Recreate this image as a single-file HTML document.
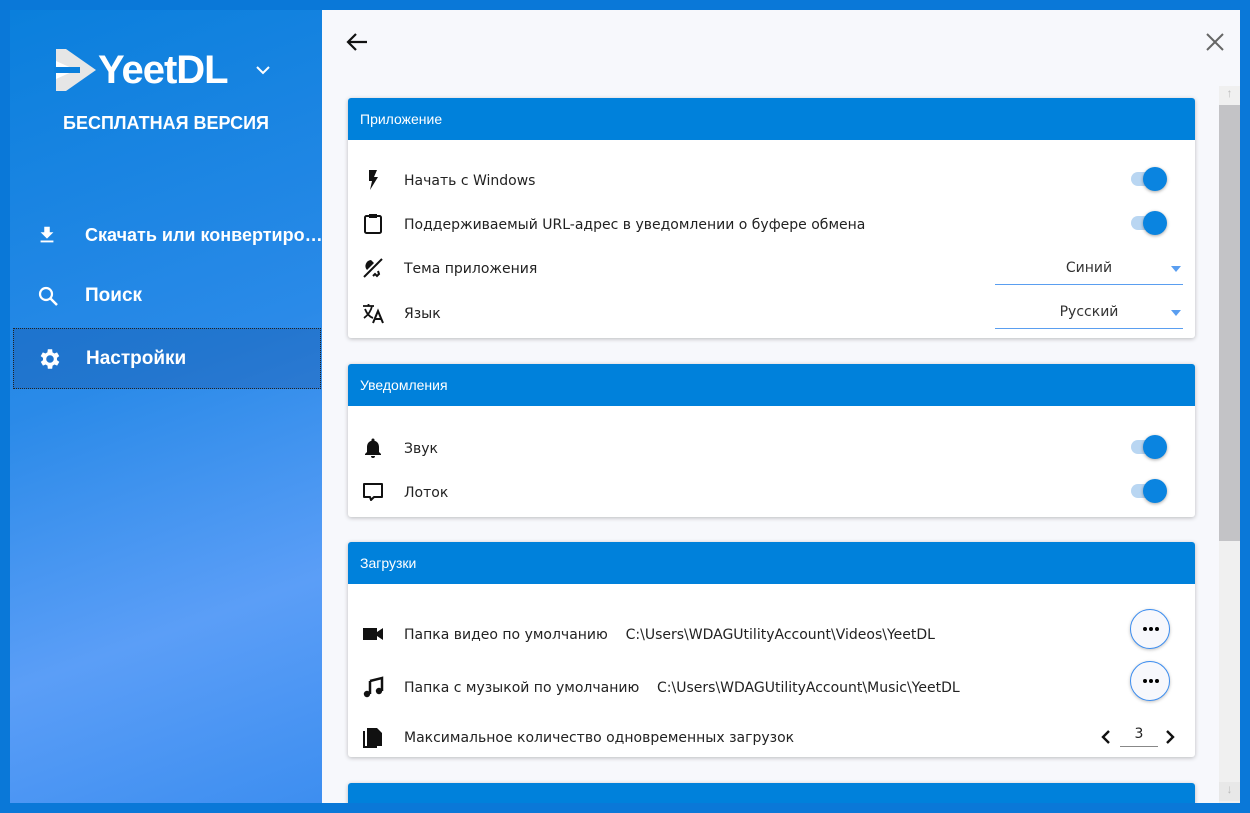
<!DOCTYPE html>
<html><head><meta charset="utf-8"><style>
*{margin:0;padding:0;box-sizing:border-box}
body{width:1250px;height:813px;overflow:hidden;background:#0a78d8;font-family:"Liberation Sans","DejaVu Sans",sans-serif;position:relative}
.side{position:absolute;left:10px;top:10px;width:312px;height:793px;background:linear-gradient(160deg,#0a7fdc 0%,#2a8ae8 45%,#5b9ef7 75%,#3d8ef0 100%);color:#fff}
.main{position:absolute;left:322px;top:10px;width:918px;height:793px;background:#f7f8fc;overflow:hidden}
.abs{position:absolute}
.nav{position:absolute;left:0;width:312px;height:62px;display:flex;align-items:center;font-weight:bold;font-size:19px;white-space:nowrap}
.nav svg{position:absolute;left:26px}
.nav span{position:absolute;left:75px}
.card{position:absolute;left:26px;width:847px;background:#fff;border-radius:3px;box-shadow:0 1px 4px rgba(0,0,0,.25)}
.hd{height:42px;background:#0081db;color:#fff;font-size:14px;line-height:42px;padding-left:12px;border-radius:3px 3px 0 0}
.row{position:absolute;left:0;width:847px;height:40px;color:#222;font-family:"DejaVu Sans","Liberation Sans",sans-serif;font-size:14px}
.row .ic{position:absolute;left:13px;top:8px}
.row .t{position:absolute;left:56px;top:13px}
.tg{position:absolute;left:783px;top:12px;width:30px;height:14px;border-radius:7px;background:#b9d6f2}
.tg:after{content:"";position:absolute;left:12px;top:-5px;width:24px;height:24px;border-radius:50%;background:#0a84e0;box-shadow:0 1px 3px rgba(0,0,0,.35)}
.sel{position:absolute;left:647px;width:188px;height:32px;border-bottom:1px solid #5a9ef0;text-align:center;font-size:14px;line-height:30px;color:#333}
.sel:after{content:"";position:absolute;right:2px;top:13px;border:5px solid transparent;border-top:6px solid #5a9ef0;border-bottom:0}
.dots{position:absolute;left:782px;width:40px;height:40px;border-radius:50%;border:1.5px solid #3d8ef0;background:#f7f8fc;box-shadow:0 1px 3px rgba(0,0,0,.25)}
.dots i{position:absolute;top:17px;width:4px;height:4px;border-radius:50%;background:#000}
</style></head><body>
<div class="side">
  <svg class="abs" style="left:44px;top:37px" width="44" height="46" viewBox="0 0 44 46"><path d="M2 2 L12 2 L42 23 L12 44 L2 44 Z" fill="#e6e6e6"/><path d="M2 14 L22 23 L2 32 Z" fill="#fff"/><rect x="0" y="20" width="26" height="6" fill="#0a7fdc"/></svg>
  <div class="abs" style="left:88px;top:38px;font-size:40px;font-weight:bold;letter-spacing:-1px;line-height:44px">YeetDL</div>
  <svg class="abs" style="left:246px;top:55px" width="14" height="10" viewBox="0 0 14 10"><path d="M1 2 L7 8 L13 2" stroke="#fff" stroke-width="2" fill="none"/></svg>
  <div class="abs" style="left:0;width:312px;top:103px;text-align:center;font-weight:bold;font-size:18px">БЕСПЛАТНАЯ ВЕРСИЯ</div>
  <div class="nav" style="top:194px"><svg width="22" height="22" viewBox="0 0 24 24"><path d="M5 20h14v-2H5zM19 9h-4V3H9v6H5l7 7z" fill="#fff"/></svg><span style="font-size:18px">Скачать или конвертиро…</span></div>
  <div class="nav" style="top:255px"><svg width="24" height="24" viewBox="0 0 24 24"><circle cx="10" cy="10" r="6" stroke="#fff" stroke-width="2.2" fill="none"/><path d="M14.5 14.5L21 21" stroke="#fff" stroke-width="2.5"/></svg><span>Поиск</span></div>
  <div class="nav" style="top:318px;left:3px;width:308px;height:61px;background:rgba(20,80,160,.35);border:1px dotted #222"><svg style="left:23px" width="26" height="26" viewBox="0 0 24 24"><path fill="#fff" d="M19.4 13a7.5 7.5 0 000-2l2.1-1.6-2-3.5-2.5 1a7 7 0 00-1.7-1L15 3h-4l-.4 2.9a7 7 0 00-1.7 1l-2.5-1-2 3.5L6.6 11a7.5 7.5 0 000 2l-2.1 1.6 2 3.5 2.5-1a7 7 0 001.7 1L11 21h4l.4-2.9a7 7 0 001.7-1l2.5 1 2-3.5zM13 15.5a3.5 3.5 0 110-7 3.5 3.5 0 010 7z" transform="translate(-1 0)"/></svg><span style="left:72px">Настройки</span></div>
</div>
<div class="main">
  <svg class="abs" style="left:24px;top:22px" width="22" height="20" viewBox="0 0 22 20"><path d="M21 10H3M10 2L2 10l8 8" stroke="#111" stroke-width="2.2" fill="none"/></svg>
  <svg class="abs" style="left:883px;top:22px" width="20" height="20" viewBox="0 0 20 20"><path d="M2 2L18 18M18 2L2 18" stroke="#666" stroke-width="2"/></svg>
  <div class="abs" style="left:897px;top:76px;width:21px;height:717px;background:#f0f0f0"></div>
  <div class="abs" style="left:897px;top:95px;width:21px;height:436px;background:#c3c3c6"></div>
  <div class="abs" style="left:897px;top:76px;width:21px;height:19px;color:#bbb;font-size:12px;text-align:center">↑</div>
  <div class="abs" style="left:897px;top:772px;width:21px;height:19px;color:#bbb;font-size:12px;text-align:center;background:#e8e8e8">↓</div>

  <div class="card" style="top:88px;height:240px"><div class="hd">Приложение</div>
    <div class="row" style="top:62px"><svg class="ic" width="24" height="24" viewBox="0 0 24 24"><path d="M8 2h8l-3 7h4L9 22l2-9H8z" fill="#111"/></svg><span class="t">Начать с Windows</span><div class="tg"></div></div>
    <div class="row" style="top:106px"><svg class="ic" width="24" height="24" viewBox="0 0 24 24"><rect x="4" y="4" width="16" height="17" rx="1.5" stroke="#111" stroke-width="2" fill="none"/><rect x="8" y="2" width="8" height="4" fill="#111"/></svg><span class="t">Поддерживаемый URL-адрес в уведомлении о буфере обмена</span><div class="tg"></div></div>
    <div class="row" style="top:150px"><svg class="ic" width="24" height="24" viewBox="0 0 24 24"><path d="M3 21L21 3" stroke="#111" stroke-width="2"/><path d="M10 4a6 6 0 00-4 10l7-7" fill="#111"/><path d="M12 20l2-2 2 2 2-2-1-3" stroke="#111" stroke-width="2" fill="none"/></svg><span class="t">Тема приложения</span><div class="sel" style="top:5px">Синий</div></div>
    <div class="row" style="top:195px"><svg class="ic" width="24" height="24" viewBox="0 0 24 24"><path d="M2 5h11M7.5 3v2M4 8c2 5 5 8 8 9M11 5c-1 5-4 9-8 12" stroke="#111" stroke-width="1.8" fill="none"/><path d="M12 22l5-12 5 12M14 18h6" stroke="#111" stroke-width="2" fill="none"/></svg><span class="t">Язык</span><div class="sel" style="top:4px">Русский</div></div>
  </div>

  <div class="card" style="top:354px;height:153px"><div class="hd">Уведомления</div>
    <div class="row" style="top:64px"><svg class="ic" width="24" height="24" viewBox="0 0 24 24"><path d="M12 22a2 2 0 002-2h-4a2 2 0 002 2zM18 16v-5c0-3-1.6-5.6-4.5-6.3V4a1.5 1.5 0 00-3 0v.7C7.6 5.4 6 8 6 11v5l-2 2v1h16v-1z" fill="#111"/></svg><span class="t">Звук</span><div class="tg"></div></div>
    <div class="row" style="top:108px"><svg class="ic" width="24" height="24" viewBox="0 0 24 24"><path d="M3 4h18v13H13l-3 3-1-3H3z" stroke="#111" stroke-width="2" fill="none" stroke-linejoin="round"/></svg><span class="t">Лоток</span><div class="tg"></div></div>
  </div>

  <div class="card" style="top:532px;height:215px"><div class="hd">Загрузки</div>
    <div class="row" style="top:72px"><svg class="ic" width="24" height="24" viewBox="0 0 24 24"><path d="M2 6h14v12H2zM16 10l6-4v12l-6-4z" fill="#111"/></svg><span class="t">Папка видео по умолчанию&nbsp;&nbsp;&nbsp;&nbsp;C:\Users\WDAGUtilityAccount\Videos\YeetDL</span><div class="dots" style="top:-5px"><i style="left:12px"></i><i style="left:18px"></i><i style="left:24px"></i></div></div>
    <div class="row" style="top:125px"><svg class="ic" width="24" height="24" viewBox="0 0 24 24"><path d="M9 6l12-3v13" stroke="#111" stroke-width="2.5" fill="none"/><path d="M9 6v13" stroke="#111" stroke-width="2.5"/><circle cx="6" cy="19" r="3.2" fill="#111"/><circle cx="18" cy="16" r="3.2" fill="#111"/></svg><span class="t">Папка с музыкой по умолчанию&nbsp;&nbsp;&nbsp;&nbsp;C:\Users\WDAGUtilityAccount\Music\YeetDL</span><div class="dots" style="top:-6px"><i style="left:12px"></i><i style="left:18px"></i><i style="left:24px"></i></div></div>
    <div class="row" style="top:175px"><svg class="ic" width="24" height="24" viewBox="0 0 24 24"><path d="M6 3h10l5 5v13H6z" fill="#111"/><path d="M3 6v16h13" stroke="#111" stroke-width="2" fill="none"/></svg><span class="t">Максимальное количество одновременных загрузок</span>
      <svg class="abs" style="left:752px;top:12px" width="12" height="16" viewBox="0 0 12 16"><path d="M9 2L3 8l6 6" stroke="#111" stroke-width="2.4" fill="none"/></svg>
      <div class="abs" style="left:772px;top:6px;width:38px;height:24px;border-bottom:1px solid #888;text-align:center;font-size:14px;line-height:22px">3</div>
      <svg class="abs" style="left:816px;top:12px" width="12" height="16" viewBox="0 0 12 16"><path d="M3 2l6 6-6 6" stroke="#111" stroke-width="2.4" fill="none"/></svg>
    </div>
  </div>

  <div class="card" style="top:773px;height:60px"><div class="hd"></div></div>
</div>
</body></html>
